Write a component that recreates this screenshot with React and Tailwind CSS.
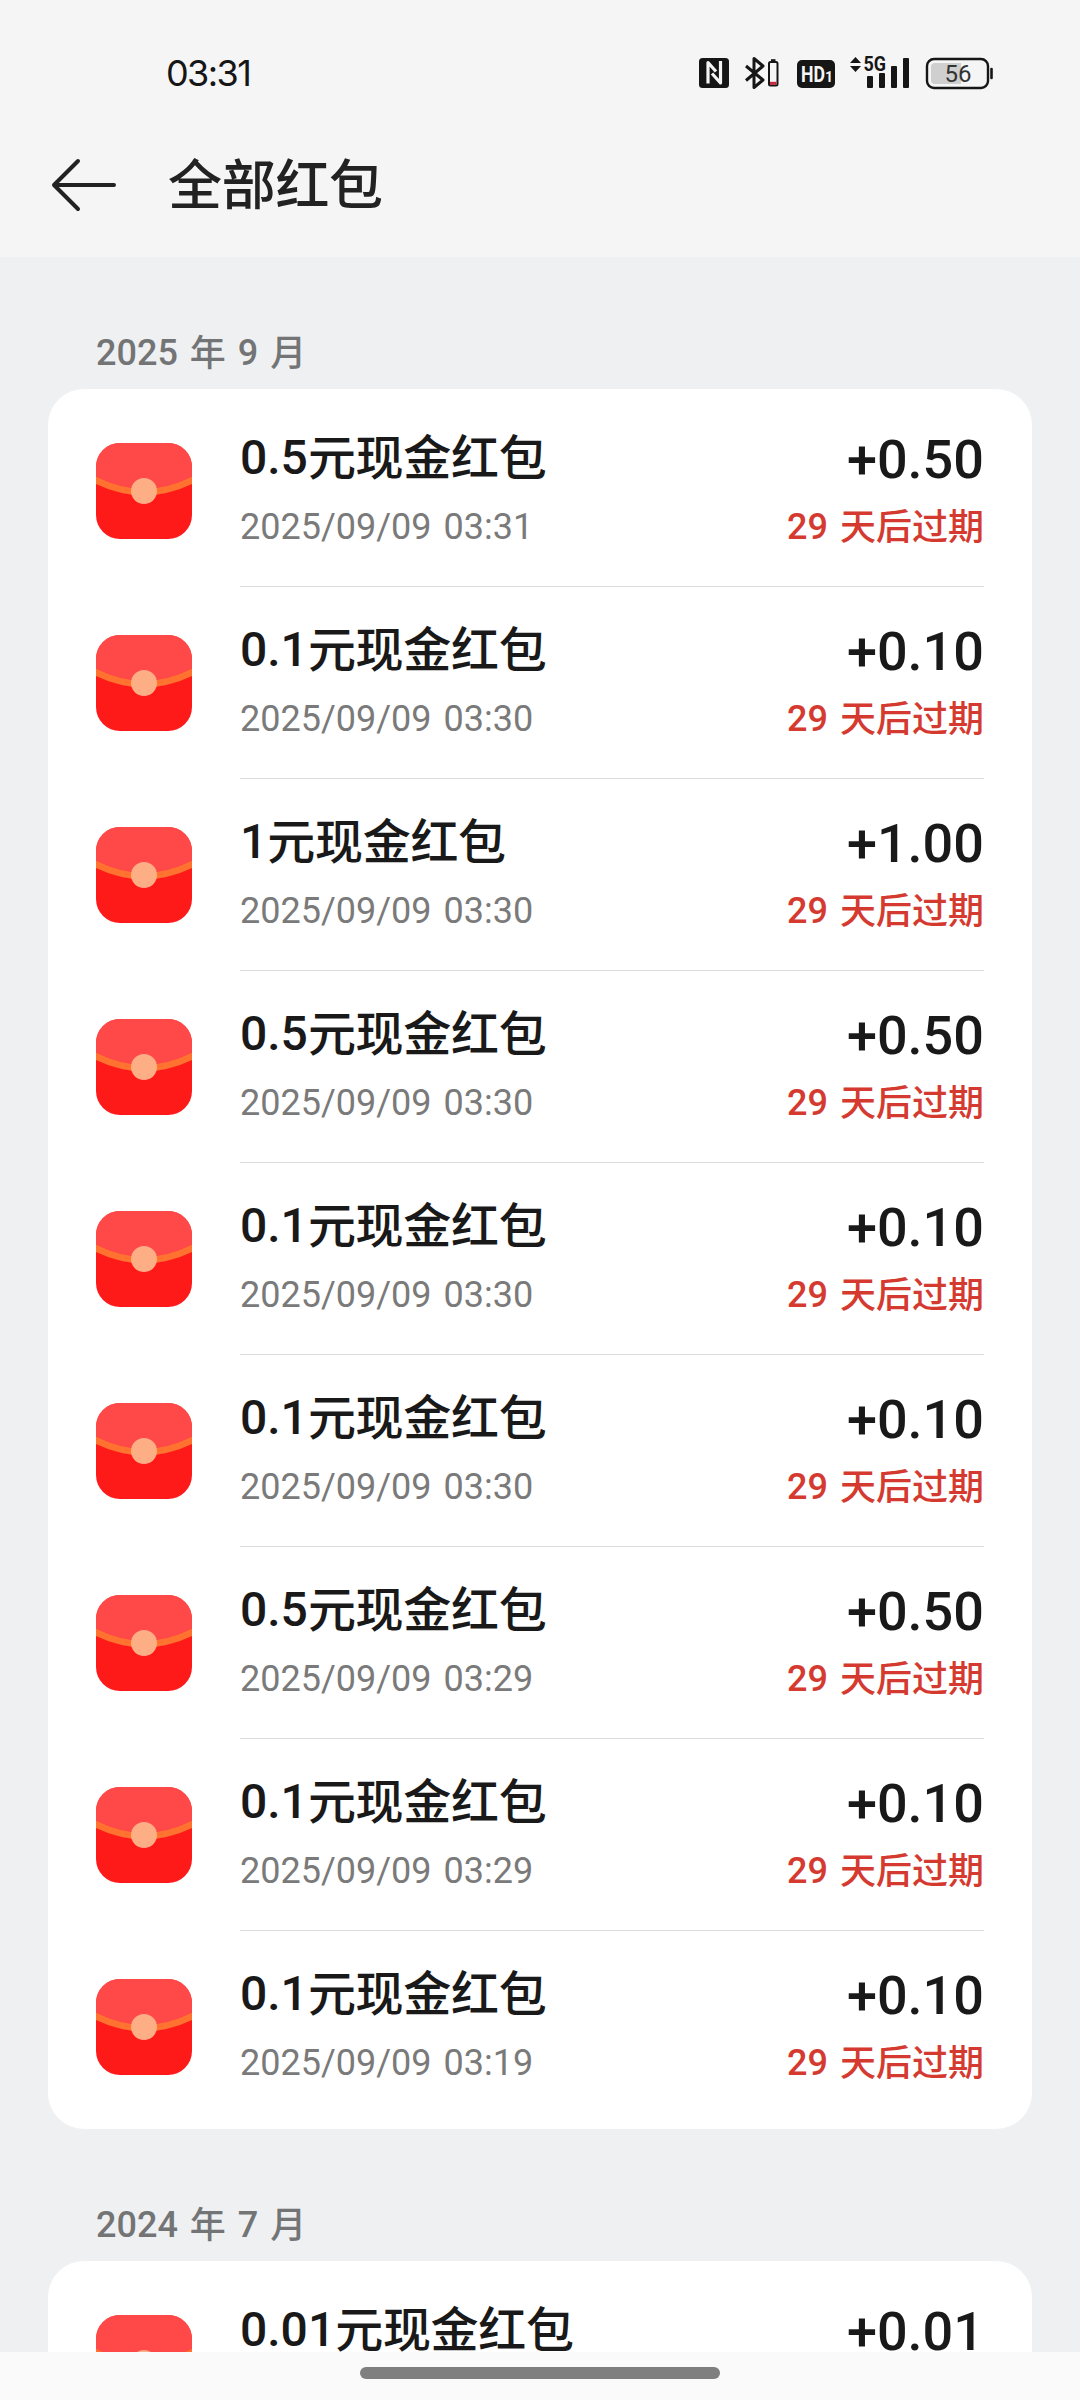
import React from "react";

const groups = [
  {
    year: "2025",
    month: "9",
    items: [
      { value: "0.5", time: "2025/09/09 03:31", amount: "+0.50" },
      { value: "0.1", time: "2025/09/09 03:30", amount: "+0.10" },
      { value: "1", time: "2025/09/09 03:30", amount: "+1.00" },
      { value: "0.5", time: "2025/09/09 03:30", amount: "+0.50" },
      { value: "0.1", time: "2025/09/09 03:30", amount: "+0.10" },
      { value: "0.1", time: "2025/09/09 03:30", amount: "+0.10" },
      { value: "0.5", time: "2025/09/09 03:29", amount: "+0.50" },
      { value: "0.1", time: "2025/09/09 03:29", amount: "+0.10" },
      { value: "0.1", time: "2025/09/09 03:19", amount: "+0.10" },
    ],
  },
  {
    year: "2024",
    month: "7",
    items: [{ value: "0.01", amount: "+0.01" }],
  },
];

const StatusBar = () => (
  <div className="flex h-[113px] items-end justify-between pl-[166px] pr-[86px] pb-[20px] text-[#161616]">
    <span className="font-['Inter','Noto_Sans_CJK_SC',sans-serif] text-[36px] leading-[40px] tracking-[-1.6px]">
      03:31
    </span>
    <svg width="296" height="40" viewBox="698 52 296 40" fill="none">
      {/* NFC */}
      <rect x="699" y="57" width="30" height="30" rx="3.5" fill="#161616" />
      <path
        d="M708 82.5V61.5L716 70.5M720.5 60V82L712 72.5"
        stroke="#f5f5f5"
        strokeWidth="3.2"
        strokeLinejoin="round"
      />
      {/* Bluetooth */}
      <path
        d="M746 65L763 79L754 86.5V57.5L763 65L746 79.5"
        stroke="#161616"
        strokeWidth="3"
        strokeLinejoin="round"
      />
      <rect x="769" y="61" width="8.5" height="23.5" rx="1.5" stroke="#161616" strokeWidth="2" />
      <path d="M771 59.2H775.5" stroke="#161616" strokeWidth="2" />
      <path d="M770 82.3H776.5" stroke="#c8283c" strokeWidth="3" />
      {/* HD */}
      <rect x="797" y="59" width="38" height="28" rx="5" fill="#161616" />
      <text
        x="801"
        y="81"
        fill="#f5f5f5"
        fontSize="22"
        fontWeight="700"
        fontFamily="Roboto"
        textLength="24"
        lengthAdjust="spacingAndGlyphs"
      >
        HD
      </text>
      <text x="825" y="81" fill="#f5f5f5" fontSize="14" fontWeight="700" fontFamily="Roboto">
        1
      </text>
      {/* Signal */}
      <path d="M850 62L855.5 56L861 62ZM850 65L855.5 71L861 65Z" fill="#161616" />
      <text
        x="863.5"
        y="70"
        fill="#161616"
        fontSize="20"
        fontWeight="700"
        fontFamily="Roboto"
        textLength="22.5"
        lengthAdjust="spacingAndGlyphs"
      >
        5G
      </text>
      <rect x="867" y="75" width="6" height="12" rx="1" fill="#161616" />
      <rect x="879" y="72" width="6" height="15" rx="1" fill="#161616" />
      <rect x="891" y="65" width="6" height="22" rx="1" fill="#161616" />
      <rect x="903" y="57" width="6" height="30" rx="1" fill="#161616" />
      {/* Battery */}
      <rect x="927" y="58" width="61" height="29" rx="7" stroke="#161616" strokeWidth="2.4" />
      <path d="M935 62H961V83H935Q931 83 931 79V66Q931 62 935 62Z" fill="#cfcfcf" />
      <path d="M991.5 68V77" stroke="#161616" strokeWidth="2.6" strokeLinecap="round" />
      <text x="944.5" y="81" fill="#333" fontSize="24" fontFamily="Roboto">
        56
      </text>
    </svg>
  </div>
);

const PacketIcon = () => (
  <svg className="mt-[48px] size-24 shrink-0 rounded-[24px]" viewBox="0 0 96 96">
    <rect width="96" height="96" fill="#ff1a1a" />
    <path d="M0 0H96V37Q48 62 0 37Z" fill="#ff4848" />
    <path d="M-2 36.5Q48 62 98 36.5" stroke="#ff7230" strokeWidth="6.5" fill="none" />
    <circle cx="48" cy="48" r="13" fill="#fdae84" />
  </svg>
);

const PacketRow = ({ item, last }) => (
  <div className="flex h-[192px] pl-12">
    <PacketIcon />
    <div
      className={`mr-12 ml-12 flex flex-1 justify-between border-b whitespace-nowrap ${
        last ? "border-transparent" : "border-[#dcdcdc]"
      }`}
    >
      <div className="pt-[35px]">
        <p className="h-14 text-[48px] leading-[56px] font-medium text-[#191919]">
          {item.value}
          <span className="align-[-1px] tracking-[-0.3px]">元现金红包</span>
        </p>
        {item.time && (
          <p className="mt-5 text-[36px] leading-[42px] text-[#7a7a7a] [word-spacing:3px]">
            {item.time}
          </p>
        )}
      </div>
      <div className="pt-[33px] text-right">
        <p className="text-[54px] leading-[64px] font-medium text-[#191919]">
          {item.amount}
        </p>
        {item.time && (
          <p className="mt-[14px] text-[36px] leading-[42px] font-medium text-[#d53a30] [word-spacing:3px]">
            29 <span className="align-[-1px]">天后过期</span>
          </p>
        )}
      </div>
    </div>
  </div>
);

const App = () => (
  <div className="flex h-[2400px] w-[1080px] flex-col overflow-hidden bg-[#eff0f2] font-['Roboto','Noto_Sans_CJK_SC',sans-serif]">
    <header className="h-[257px] shrink-0 bg-[#f5f5f5]">
      <StatusBar />
      <div className="flex h-[144px] items-center pl-[50px]">
        <svg width="68" height="56" viewBox="0 0 68 56" fill="none">
          <path
            d="M28 4L4 28L28 52M4 28H64"
            stroke="#222"
            strokeWidth="4"
            strokeLinecap="round"
            strokeLinejoin="round"
          />
        </svg>
        <h1 className="ml-[50px] pt-[3px] text-[54px] leading-[72px] font-medium tracking-[-0.3px] text-[#222]">
          全部红包
        </h1>
      </div>
    </header>

    <main className="min-h-0 flex-1 overflow-hidden px-12">
      {groups.map((group) => (
        <section key={group.year}>
          <h2 className="h-[132px] pt-[75px] pl-12 text-[36px] leading-[42px] font-medium text-[#737475] [word-spacing:3px]">
            {group.year} <span className="align-[-1px]">年</span>{" "}
            {group.month} <span className="align-[-1px]">月</span>
          </h2>
          <div className="rounded-[36px] bg-white py-1.5">
            {group.items.map((item, index) => (
              <PacketRow
                key={index}
                item={item}
                last={index === group.items.length - 1}
              />
            ))}
          </div>
        </section>
      ))}
    </main>

    <footer className="flex h-12 shrink-0 justify-center bg-[#fafafa] pt-[15px]">
      <div className="h-3 w-[360px] rounded-full bg-[#7f7f7f]" />
    </footer>
  </div>
);

export default App;
